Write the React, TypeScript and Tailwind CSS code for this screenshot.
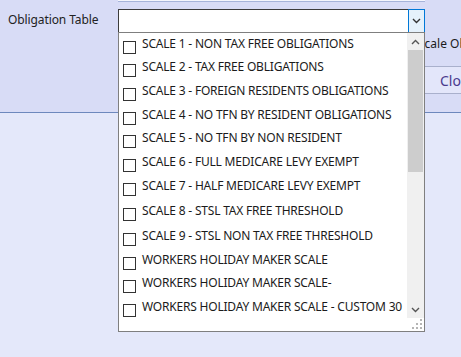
import React from 'react';

const ITEMS = [
    { label: 'SCALE 1 - NON TAX FREE OBLIGATIONS', h: 'h-[23px]' },
    { label: 'SCALE 2 - TAX FREE OBLIGATIONS', h: 'h-[24px]' },
    { label: 'SCALE 3 - FOREIGN RESIDENTS OBLIGATIONS', h: 'h-[24px]' },
    { label: 'SCALE 4 - NO TFN BY RESIDENT OBLIGATIONS', h: 'h-[23px]' },
    { label: 'SCALE 5 - NO TFN BY NON RESIDENT', h: 'h-[24px]' },
    { label: 'SCALE 6 - FULL MEDICARE LEVY EXEMPT', h: 'h-[24px]' },
    { label: 'SCALE 7 - HALF MEDICARE LEVY EXEMPT', h: 'h-[25px]' },
    { label: 'SCALE 8 - STSL TAX FREE THRESHOLD', h: 'h-[25px]' },
    { label: 'SCALE 9 - STSL NON TAX FREE THRESHOLD', h: 'h-[24px]' },
    { label: 'WORKERS HOLIDAY MAKER SCALE', h: 'h-[23px]' },
    { label: 'WORKERS HOLIDAY MAKER SCALE-', h: 'h-[24px]' },
    { label: 'WORKERS HOLIDAY MAKER SCALE - CUSTOM 30', h: 'h-[24px]' },
];

function Chevron({ up = false, color = '#555' }: { up?: boolean; color?: string }) {
    return (
        <svg width="9" height="6" viewBox="0 0 9 6">
            <path
                d={up ? 'M1 5 L4.5 1.5 L8 5' : 'M1 1 L4.5 4.5 L8 1'}
                fill="none"
                stroke={color}
                strokeWidth="1.4"
            />
        </svg>
    );
}

function Grip() {
    const dots = [
        [8, 0],
        [4, 4], [8, 4],
        [0, 8], [4, 8], [8, 8],
    ];
    return (
        <svg width="11" height="11" viewBox="0 0 11 11">
            {dots.map(([x, y]) => (
                <rect key={`${x}-${y}`} x={x} y={y} width="2" height="2" fill="#b5b5b5" />
            ))}
        </svg>
    );
}

export default function App() {
    return (
        <div className="relative w-[461px] h-[357px] overflow-hidden bg-[#e4e8fa] text-[12px] text-[#1b1b1b] font-['Noto_Sans',sans-serif]">
            {/* top panel */}
            <div className="h-[113px] bg-[#d8dcf6] border-b border-[#6d88bd] flex">
                <div className="w-[118px] shrink-0 pl-[8px] pt-[11px] text-[#222] whitespace-nowrap tracking-[-0.1px]">Obligation Table</div>
                <div className="w-[307px] shrink-0 flex flex-col">
                    <div className="h-[2px] bg-[#f4f6fd] border-b border-[#a6b4da]" />
                    <div className="mt-[7px] h-[24px] flex border border-[#3c3c3c] bg-white">
                        <div className="flex-1" />
                        <div className="w-[17px] -my-px -mr-px border border-[#0078d7] bg-[#e5f1fb] flex items-center justify-center">
                            <Chevron color="#333" />
                        </div>
                    </div>
                </div>
                <div className="w-[120px] shrink-0 flex flex-col pt-[35px]">
                    <div className="whitespace-nowrap -ml-[7px]">Scale Obligation</div>
                    <div className="mt-[13px] h-[28px] w-[80px] -ml-px border border-[#a9b0cc] bg-[#e3e6fa] text-[#4a3a8e] flex items-center pl-[15px] text-[14px]">
                        Close
                    </div>
                </div>
            </div>

            {/* open dropdown list */}
            <div className="absolute left-[118px] top-[32px] w-[307px] h-[300px] bg-white border border-[#7f7f7f] flex">
                <div className="flex-1 flex flex-col pt-[1px]">
                    {ITEMS.map((item) => (
                        <div key={item.label} className={`${item.h} flex items-start`}>
                            <div className="ml-[4px] mt-[7px] w-[13px] h-[13px] border border-[#333] bg-white shrink-0" />
                            <span className="ml-[6px] mt-[1px] whitespace-nowrap tracking-[-0.2px]">{item.label}</span>
                        </div>
                    ))}
                </div>
                <div className="w-[17px] flex flex-col">
                    <div className="h-[285px] bg-[#f0f0f0] flex flex-col">
                        <div className="h-[17px] flex items-center justify-center">
                            <Chevron up />
                        </div>
                        <div className="h-[122px] bg-[#cdcdcd] mx-px" />
                        <div className="flex-1" />
                        <div className="h-[17px] flex items-center justify-center">
                            <Chevron />
                        </div>
                    </div>
                    <div className="flex-1 flex items-end justify-end pr-px pb-px">
                        <Grip />
                    </div>
                </div>
            </div>
        </div>
    );
}
